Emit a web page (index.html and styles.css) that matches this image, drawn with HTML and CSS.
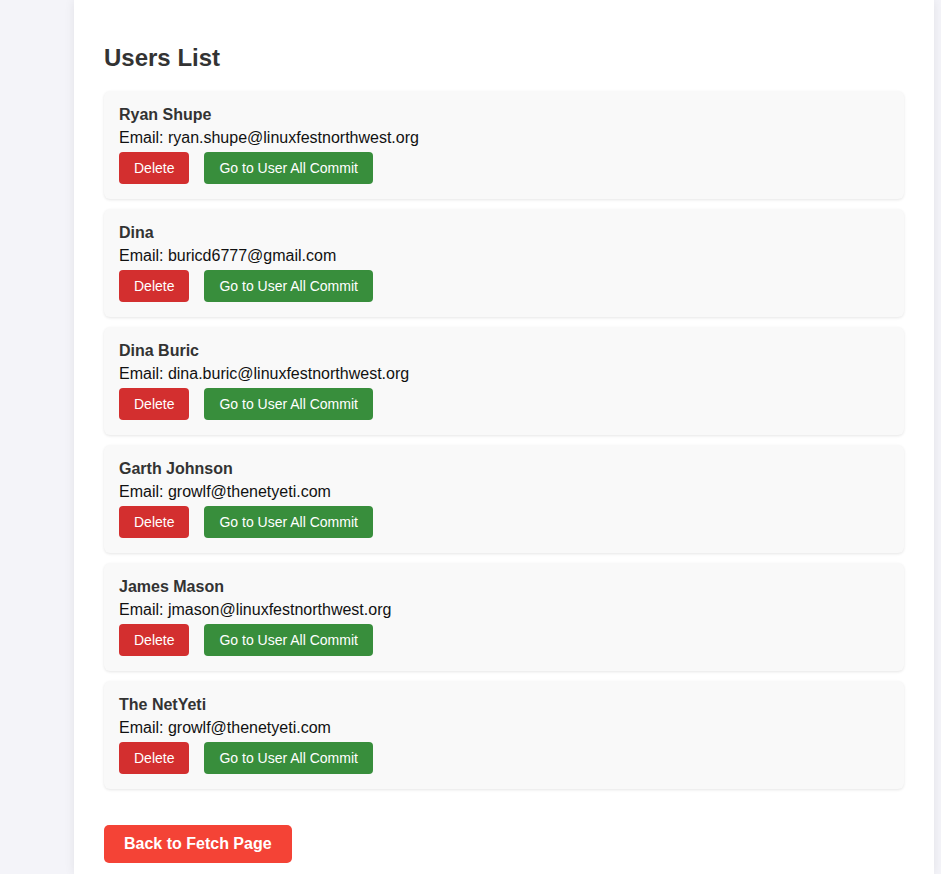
FILE: index.html
```html
<!DOCTYPE html>
<html lang="en">
<head>
<meta charset="utf-8">
<title>Users List</title>
<link rel="stylesheet" href="styles.css">
</head>
<body>
<main class="container">
  <h2 class="title">Users List</h2>
  <ul class="user-list">
    <li class="user-card">
      <h3 class="user-name">Ryan Shupe</h3>
      <p class="user-email">Email: ryan.shupe@linuxfestnorthwest.org</p>
      <div class="actions"><button class="btn btn-delete">Delete</button><button class="btn btn-commit">Go to User All Commit</button></div>
    </li>
    <li class="user-card">
      <h3 class="user-name">Dina</h3>
      <p class="user-email">Email: buricd6777@gmail.com</p>
      <div class="actions"><button class="btn btn-delete">Delete</button><button class="btn btn-commit">Go to User All Commit</button></div>
    </li>
    <li class="user-card">
      <h3 class="user-name">Dina Buric</h3>
      <p class="user-email">Email: dina.buric@linuxfestnorthwest.org</p>
      <div class="actions"><button class="btn btn-delete">Delete</button><button class="btn btn-commit">Go to User All Commit</button></div>
    </li>
    <li class="user-card">
      <h3 class="user-name">Garth Johnson</h3>
      <p class="user-email">Email: growlf@thenetyeti.com</p>
      <div class="actions"><button class="btn btn-delete">Delete</button><button class="btn btn-commit">Go to User All Commit</button></div>
    </li>
    <li class="user-card">
      <h3 class="user-name">James Mason</h3>
      <p class="user-email">Email: jmason@linuxfestnorthwest.org</p>
      <div class="actions"><button class="btn btn-delete">Delete</button><button class="btn btn-commit">Go to User All Commit</button></div>
    </li>
    <li class="user-card">
      <h3 class="user-name">The NetYeti</h3>
      <p class="user-email">Email: growlf@thenetyeti.com</p>
      <div class="actions"><button class="btn btn-delete">Delete</button><button class="btn btn-commit">Go to User All Commit</button></div>
    </li>
  </ul>
  <button class="btn-back">Back to Fetch Page</button>
</main>
</body>
</html>
```

FILE: styles.css
```css
* { box-sizing: border-box; }
html, body { height: 100%; }
body {
  margin: 0;
  background: #f4f4f9;
  font-family: "Liberation Sans", Arial, sans-serif;
  display: flex;
  justify-content: flex-end;
  padding-right: 7px;
  overflow: hidden;
}
.container {
  width: 860px;
  background: #fff;
  padding: 20px 30px 40px;
  box-shadow: 0 0 10px rgba(0,0,0,0.08);
  min-height: 100%;
}
.title {
  font-size: 24px;
  font-weight: bold;
  color: #333;
  margin: 24px 0 19px;
  line-height: 28px;
}
.user-list {
  list-style: none;
  margin: 0;
  padding: 0;
  display: flex;
  flex-direction: column;
  gap: 10px;
}
.user-card {
  background: #f9f9f9;
  border-radius: 6px;
  padding: 15px;
  box-shadow: 0 1px 3px rgba(0,0,0,0.1);
}
.user-name {
  margin: 0;
  font-size: 16px;
  line-height: 18px;
  font-weight: bold;
  color: #333;
}
.user-email {
  margin: 5px 0;
  font-size: 16px;
  line-height: 18px;
  color: #111;
}
.actions {
  display: flex;
  gap: 15px;
}
.btn {
  border: none;
  border-radius: 4px;
  color: #fff;
  font-family: "Liberation Sans", Arial, sans-serif;
  font-size: 14px;
  line-height: 16px;
  padding: 8px 15px;
  cursor: pointer;
}
.btn-delete { background: #d32f2f; }
.btn-commit { background: #388e3c; }
.btn-back {
  margin-top: 36px;
  background: #f44336;
  color: #fff;
  border: none;
  border-radius: 5px;
  font-family: "Liberation Sans", Arial, sans-serif;
  font-size: 16px;
  font-weight: bold;
  line-height: 18px;
  padding: 10px 20px;
  height: 38px;
  cursor: pointer;
}
```
